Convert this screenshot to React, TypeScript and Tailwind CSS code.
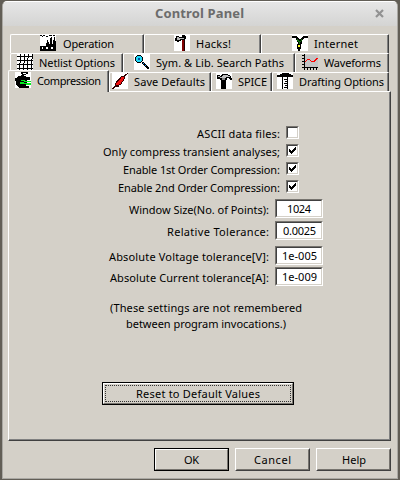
import React from "react";

function Pix({ children, white = true }: { children: React.ReactNode; white?: boolean }) {
  return (
    <svg width="16" height="16" viewBox="0 0 16 16" shapeRendering="crispEdges" className="shrink-0">
      {white && <rect width="16" height="16" fill="#fff" />}
      {children}
    </svg>
  );
}

const Factory = () => (
  <Pix>
    <path d="M0 11h16v5H0zM7 5h1v6H7zM6 8h1v3H6zM8 7h1v4H8zM10 3h1v8h-1zM11 2h1v9h-1zM9 9h1v2H9zM14 2h1v9h-1zM13 5h1v6h-1zM12 9h1v2h-1zM15 6h1v5h-1zM0 0h2v1H0zM3 0h2v1H3zM6 1h2v1H6zM9 0h3v1H9zM2 1h1v1H2zM13 0h2v1h-2z" fill="#000" />
    <path d="M2 12h1v2H2zM6 12h2v2H6zM11 12h2v2h-2z" fill="#fff" />
  </Pix>
);

const Axe = () => (
  <Pix>
    <path d="M8 4h3v12H8z" fill="#800000" />
    <path d="M10 2h1v14h-1z" fill="#200000" />
    <path d="M2 1h3v1h3V0h3v1h1v3h-1v1H7v1H5v1H3V6H1V3h1z" fill="#000" />
    <path d="M3 2h2v1h5v1H6v1H3z" fill="#b8b8b8" />
  </Pix>
);

const Internet = () => (
  <Pix>
    <path d="M0 1h5v1h1v1h1v1h2V3h1V2h1V1h5v2h-4v1h-1v1h-1v4H9v5H8v2H6v-2H5V9h1V7H5V5H4V3H0z" fill="#000" />
    <path d="M5 4h1v2H5zM6 5h1v2H6zM7 6h1v3H7zM9 4h1v2H9zM8 6h1v1H8z" fill="#087008" />
    <path d="M6 10h2v2H6z" fill="#ffff20" />
  </Pix>
);

const Grid = () => (
  <Pix>
    <path d="M3 0h1v9H3zM2 9h1v7H2zM7 0h1v9H7zM6 9h1v7H6zM11 0h1v4h-1zM10 4h1v12h-1zM15 0h1v5h-1zM14 5h1v11h-1zM0 2h16v1H0zM0 6h16v1H0zM0 10h16v1H0zM0 14h16v1H0z" fill="#000" />
  </Pix>
);

const Magnifier = () => (
  <Pix>
    <path d="M3 1h4v1h1v1h1v4H8v1H7v1H3V8H2V7H1V3h1V2h1z" fill="#000" />
    <path d="M3 2h4v1h1v4H7v1H3V7H2V3h1z" fill="#20d8f8" />
    <path d="M4 4h2v2H4z" fill="#0050a0" />
    <path d="M8 8h2v1h1v1h1v1h1v1h1v1h1v2h-2v-1h-1v-1h-1v-1h-1v-1H9v-1H8z" fill="#000" />
    <path d="M9 9h1v1H9zM11 11h1v1h-1z" fill="#1090ff" />
  </Pix>
);

const Wave = () => (
  <Pix white={false}>
    <path d="M3 1h13v12H3z" fill="#c4c4c4" />
    <path d="M2 0h1v16H2zM0 13h16v1H0zM0 1h2v1H0zM0 4h2v1H0zM0 7h2v1H0zM0 10h2v1H0zM5 14h1v2H5zM8 14h1v2H8zM11 14h1v2h-1zM14 14h1v2h-1z" fill="#000" />
    <path d="M3 7h1V6h1V5h3v1h1v1h3V6h1V5h1V4h2v1h-1v1h-1v1h-1v1H9V7H8V6H5v1H4v1H3z" fill="#f00" />
  </Pix>
);

const Clamp = () => (
  <Pix>
    <path d="M6 0h7v2h-2v1H9v1h2v1h4v3h-3v5h-1v1h3v2H4v-1H3v-1H2v-1H1V9H0V6h2V5h1V4h3V3h1V2H6z" fill="#000" />
    <path d="M8 1h3v1H8z" fill="#fff" />
    <path d="M6 8h4v1h6v1H9V9H6zM5 10h4v1h7v2h-5v-1H5z" fill="#00ef20" />
  </Pix>
);

const Resistor = () => (
  <Pix>
    <path d="M15 0h1v1h-1v1h-1v1h-1v3h-1v2h-1v1h-1v2H9v1H7v2H3v1H2v1H0v-1h1v-1h1v-1h1v-3h1V8h1V7h1V6h1V5h1V4h1V3h3V2h1V1h2z" fill="#300" />
    <path d="M9 4h3v2h-1v2h-1v1H9v2H7v1H4v-2h1V9h1V8h1V7h1V6h1z" fill="#f01010" />
  </Pix>
);

const Hammer = () => (
  <Pix>
    <path d="M1 2h3v1h1V2h1V1h6v1h2v1h1v2h1v2h-2V6h-1V5h-2v2H4V6H1zM5 7h5v9H5z" fill="#000" />
    <path d="M2 3h2v1h2V3h1V2h5v1h2v1h-4v1H4V4H2z" fill="#c0c0c0" />
    <path d="M6 5h3v2H6z" fill="#888" />
  </Pix>
);

const TSquare = () => (
  <Pix>
    <path d="M0 2h3V1h2V0h7v1h2v1h2v2H0zM5 4h1v12H5zM10 4h1v12h-1zM7 6h3v1H7zM8 8h2v1H8zM7 10h3v1H7zM8 12h2v1H8zM7 14h3v1H7z" fill="#000" />
  </Pix>
);

function Tab({ icon, label, box, text }: { icon: React.ReactNode; label: string; box: string; text: string }) {
  return (
    <div className={`flex h-[19px] shrink-0 rounded-tl-[2px] rounded-tr-[1px] border-t border-r border-l border-t-white border-r-[#404040] border-l-white shadow-[inset_-1px_0_#808080] ${box}`}>
      {icon}
      <Label text={label} className={text} />
    </div>
  );
}

function Label({ text, className }: { text: string; className: string }) {
  return (
    <svg height="18" className={`shrink-0 overflow-visible ${className}`}>
      <text x="0" y="13" textLength="100%" lengthAdjust="spacing">{text}</text>
    </svg>
  );
}

function Check({ label, checked, width }: { label: string; checked?: boolean; width: string }) {
  return (
    <div className="flex h-[18px] justify-end">
      <Label text={label} className={`-mt-px ${width}`} />
      <span className="ml-[6px] h-[13px] w-[13px] border border-t-[#77746f] border-r-white border-b-white border-l-[#77746f]">
        <span className="block h-[11px] w-[11px] border border-t-[#404040] border-r-[#d4d0c8] border-b-[#d4d0c8] border-l-[#404040] bg-white">
          {checked && (
            <svg width="9" height="9" viewBox="0 0 9 9" shapeRendering="crispEdges">
              <path d="M1 3h1v1h1v1h1V4h1V3h1V2h1V1h1v3H7v1H6v1H5v1H4v1H3V7H2V6H1z" />
            </svg>
          )}
        </span>
      </span>
    </div>
  );
}

function Field({ label, value, width, vw, gap }: { label: string; value: string; width: string; vw: string; gap: string }) {
  return (
    <div className={`flex h-[19px] justify-end ${gap}`}>
      <Label text={label} className={`mt-[2px] ${width}`} />
      <div className="ml-[6px] h-[19px] w-[48px] border border-t-[#77746f] border-r-white border-b-white border-l-[#77746f]">
        <div className="flex h-[17px] justify-center border border-t-[#404040] border-r-[#d4d0c8] border-b-[#d4d0c8] border-l-[#404040] bg-white">
          <Label text={value} className={`-mt-px ${vw}`} />
        </div>
      </div>
    </div>
  );
}

function Raised({ label, width, primary }: { label: string; width: string; primary?: boolean }) {
  return (
    <button className={`flex h-[23px] w-[75px] border ${primary ? "border-black" : "border-t-white border-r-[#404040] border-b-[#404040] border-l-white"}`}>
      <span className={`flex h-[21px] w-[73px] justify-center border ${primary ? "border-t-white border-l-white" : "border-t-[#d4d0c8] border-l-[#d4d0c8]"} border-r-[#77746f] border-b-[#77746f]`}>
        <Label text={label} className={`mt-px ${width}`} />
      </span>
    </button>
  );
}

export default function App() {
  return (
    <div className="h-[480px] w-[400px] overflow-hidden bg-[#625e56] pt-px pl-[2px] font-['Noto_Sans','Open_Sans',sans-serif] text-[11px] text-black">
      <div className="h-[478px] w-[396px] rounded-t-[5px] border border-[#aaa8a3] border-t-white bg-[#d4d0c8]">
        <header className="flex h-[24px] rounded-t-[4px] bg-gradient-to-b from-[#e6e6e6] to-[#d4d4d3] text-[13px] font-bold text-[#6c6c6c]">
          <Label text="Control Panel" className="ml-[152px] w-[89px] translate-y-[3px] fill-[#6c6c6c]" />
          <svg width="9" height="9" viewBox="0 0 9 9" className="mt-[7px] ml-[131px]">
            <path d="M1 1l7 7M8 1L1 8" stroke="#929292" strokeWidth="2.2" />
          </svg>
        </header>

        <nav className="pt-[8px] pl-[7px]">
          <div className="flex h-[19px]">
            <Tab icon={<Factory />} label="Operation" box="w-[134px] pl-[29px]" text="ml-[7px] w-[51px]" />
            <Tab icon={<Axe />} label="Hacks!" box="w-[117px] pl-[29px]" text="ml-[6px] w-[35px]" />
            <Tab icon={<Internet />} label="Internet" box="w-[128px] pl-[30px]" text="ml-[6px] w-[44px]" />
          </div>
          <div className="flex h-[19px]">
            <Tab icon={<Grid />} label="Netlist Options" box="w-[113px] pl-[6px]" text="ml-[6px] w-[76px]" />
            <Tab icon={<Magnifier />} label="Sym. & Lib. Search Paths" box="w-[172px] pl-[10px]" text="ml-[6px] w-[128px]" />
            <Tab icon={<Wave />} label="Waveforms" box="w-[94px] pl-[6px]" text="ml-[6px] w-[57px]" />
          </div>
          <div className="-ml-[2px] flex h-[19px]">
            <div className="relative z-10 -mt-[2px] flex h-[22px] w-[101px] rounded-tl-[2px] rounded-tr-[1px] border-t border-r border-l border-t-white border-r-[#404040] border-l-white bg-[#d4d0c8] pt-px pl-[6px] shadow-[inset_-1px_0_#808080]">
              <Clamp />
              <Label text="Compression" className="ml-[6px] w-[64px]" />
            </div>
            <Tab icon={<Resistor />} label="Save Defaults" box="w-[102px] pl-[2px]" text="ml-[6px] w-[71px]" />
            <Tab icon={<Hammer />} label="SPICE" box="w-[61px] pl-[4px]" text="ml-[6px] w-[29px]" />
            <Tab icon={<TSquare />} label="Drafting Options" box="w-[117px] pl-[4px]" text="ml-[6px] w-[85px]" />
          </div>
        </nav>

        <main className="ml-[5px] h-[350px] w-[383px] border-t border-r border-b border-l border-t-white border-r-[#404040] border-b-[#404040] border-l-white pr-px pb-px shadow-[inset_-1px_-1px_#808080]">
          <div className="w-[290px] pt-[34px]">
            <Check label="ASCII data files:" width="w-[83px]" />
            <Check label="Only compress transient analyses;" width="w-[177px]" checked />
            <Check label="Enable 1st Order Compression:" width="w-[157px]" checked />
            <Check label="Enable 2nd Order Compression:" width="w-[162px]" checked />
          </div>
          <div className="w-[314px] pt-px">
            <Field label="Window Size(No. of Points):" value="1024" width="w-[140px]" vw="w-[24px]" gap="" />
            <Field label="Relative Tolerance:" value="0.0025" width="w-[102px]" vw="w-[33px]" gap="mt-[3px]" />
            <Field label="Absolute Voltage tolerance[V]:" value="1e-005" width="w-[160px]" vw="w-[35px]" gap="mt-[6px]" />
            <Field label="Absolute Current tolerance[A]:" value="1e-009" width="w-[159px]" vw="w-[35px]" gap="mt-[2px]" />
          </div>
          <div className="mt-[13px] ml-[101px] flex w-[192px] flex-col items-center">
            <Label text="(These settings are not remembered" className="mb-[-2px] w-[192px]" />
            <Label text="between program invocations.)" className="w-[160px]" />
          </div>
          <button className="mt-[49px] ml-[93px] block h-[23px] w-[192px] border border-black">
            <span className="flex h-[21px] border border-t-white border-r-[#77746f] border-b-[#77746f] border-l-white p-px">
              <span className="flex h-[17px] w-full justify-center border border-dotted border-[#333]">
                <Label text="Reset to Default Values" className="-mt-px w-[124px]" />
              </span>
            </span>
          </button>
        </main>

        <footer className="mt-[7px] ml-[151px] flex gap-[6px]">
          <Raised label="OK" width="w-[15px]" primary />
          <Raised label="Cancel" width="w-[37px]" />
          <Raised label="Help" width="w-[24px]" />
        </footer>
      </div>
    </div>
  );
}
